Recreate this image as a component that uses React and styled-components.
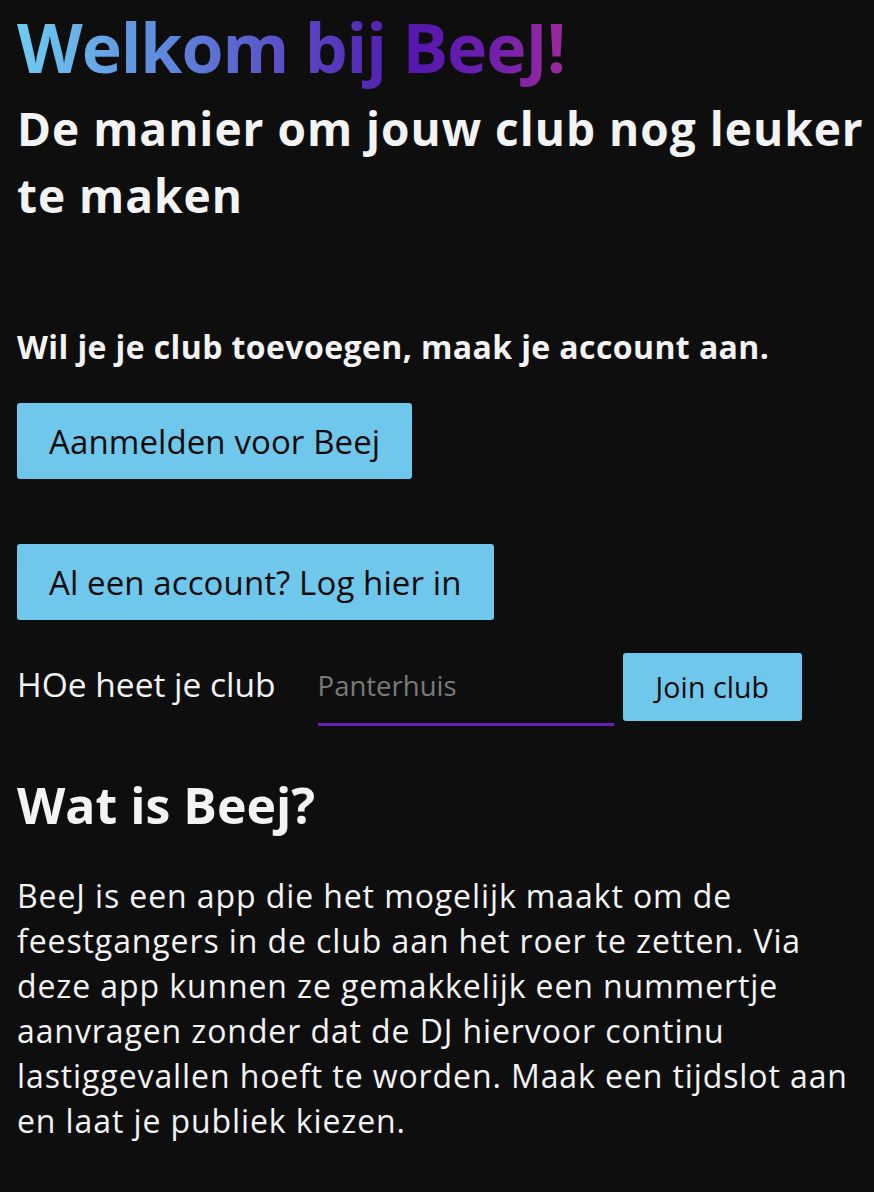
import React from "react";
import styled, { createGlobalStyle } from "styled-components";

const GlobalStyle = createGlobalStyle`
  html, body {
    margin: 0;
    padding: 0;
    background: #0e0e0e;
  }
  body {
    font-family: "Open Sans", "Noto Sans", sans-serif;
    color: #f3f3f3;
  }
`;

const Page = styled.main`
  padding: 5px 8px 40px 17px;
  min-height: 1192px;
  box-sizing: border-box;
`;

const Title = styled.h1`
  margin: 0;
  width: fit-content;
  font-size: 68px;
  font-weight: 700;
  line-height: 84px;
  letter-spacing: -1.1px;
  background: linear-gradient(90deg, #6fcdf1 0%, #5e86dc 28%, #5a46c2 52%, #5318ad 72%, #6a1fae 85%, #9b2a9c 100%);
  -webkit-background-clip: text;
  background-clip: text;
  color: transparent;
`;

const Subtitle = styled.h2`
  margin: 6px 0 0;
  font-size: 46px;
  font-weight: 700;
  line-height: 67px;
  letter-spacing: 1px;
`;

const Lead = styled.p`
  margin: 96px 0 0;
  font-size: 32px;
  line-height: 44px;
  font-weight: 700;
  letter-spacing: 0.4px;
`;

const Button = styled.button`
  display: flex;
  align-items: center;
  height: ${({ $h }) => $h || 76}px;
  padding: 0 ${({ $pad }) => $pad || 32}px;
  background: #70c7ec;
  color: #0b0b0b;
  border: none;
  border-radius: 3px;
  font-family: inherit;
  font-size: ${({ $size }) => $size || 33}px;
  letter-spacing: 0.1px;
  cursor: pointer;
`;

const Stack = styled.div`
  display: flex;
  flex-direction: column;
  align-items: flex-start;
  gap: 65px;
  margin-top: 34px;
`;

const JoinRow = styled.div`
  display: flex;
  align-items: flex-start;
  margin-top: 33px;
`;

const Label = styled.label`
  font-size: 33.5px;
  line-height: 62px;
  margin-right: 42px;
`;

const Input = styled.input`
  width: 296px;
  height: 73px;
  box-sizing: border-box;
  padding: 0 0 6px;
  background: transparent;
  border: none;
  border-bottom: 3px solid #6a1fb3;
  color: #f3f3f3;
  font-family: inherit;
  font-size: 27.5px;
  margin-right: 9px;
  outline: none;
  &::placeholder {
    color: #7a7a7a;
  }
`;

const SectionTitle = styled.h2`
  margin: 49px 0 0;
  font-size: 50px;
  line-height: 60px;
  font-weight: 700;
`;

const Body = styled.p`
  margin: 38px 0 0;
  font-size: 32px;
  line-height: 45px;
  letter-spacing: 0.9px;
`;

export default function App() {
  return (
    <>
      <GlobalStyle />
      <Page>
        <Title>Welkom bij BeeJ!</Title>
        <Subtitle>De manier om jouw club nog leuker te maken</Subtitle>
        <Lead>Wil je je club toevoegen, maak je account aan.</Lead>
        <Stack>
          <Button>Aanmelden voor Beej</Button>
          <Button>Al een account? Log hier in</Button>
        </Stack>
        <JoinRow>
          <Label>HOe heet je club</Label>
          <Input placeholder="Panterhuis" />
          <Button $h={68} $size={28.5} $pad={33}>Join club</Button>
        </JoinRow>
        <SectionTitle>Wat is Beej?</SectionTitle>
        <Body>
          BeeJ is een app die het mogelijk maakt om de feestgangers in de club
          aan het roer te zetten. Via deze app kunnen ze gemakkelijk een
          nummertje aanvragen zonder dat de DJ hiervoor continu lastiggevallen
          hoeft te worden. Maak een tijdslot aan en laat je publiek kiezen.
        </Body>
      </Page>
    </>
  );
}
